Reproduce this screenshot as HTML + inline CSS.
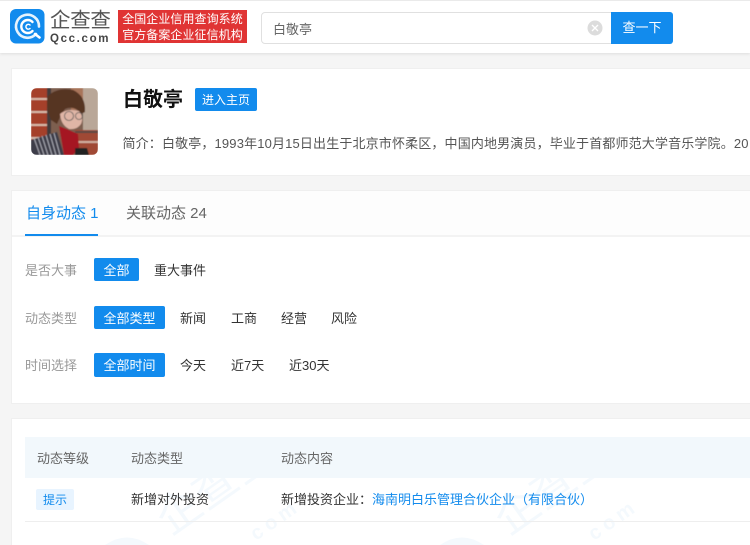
<!DOCTYPE html>
<html lang="zh"><head><meta charset="utf-8"><style>
html,body{margin:0;padding:0;width:750px;height:545px;overflow:hidden}
body{background:#f5f5f5;font-family:"Liberation Sans","Noto Sans CJK SC",sans-serif;font-size:13px;color:#333}
#w{position:relative;width:750px;height:545px;overflow:hidden}
.a{position:absolute;white-space:nowrap}
.card{position:absolute;left:11px;width:739px;background:#fff;border:1px solid #efefef;border-right:0;box-sizing:border-box}
.t{position:absolute;white-space:nowrap;line-height:20px;height:20px}
.btn{position:absolute;left:94px;height:23px;line-height:25px;background:#128bed;color:#fff;text-align:center;border-radius:2px}
.lab{color:#999}
</style></head><body><div id="w">
<div class="a" style="left:0;top:0;width:750px;height:53px;background:#fff;border-top:1px solid #eaeaea;box-sizing:border-box;box-shadow:0 1px 3px rgba(0,0,0,.1)"></div>
<svg class="a" style="left:10px;top:9px" width="35" height="35" viewBox="0 0 35 35"><rect width="34.500" height="34.500" rx="6" fill="#128bed"/><g fill="none" stroke="#fff" stroke-linecap="round"><path d="M26 25A11.500 11.500 0 1 1 29 17.500" stroke-width="2.600" stroke="#e6f3fd"/><path d="M25 25L29.500 28.500" stroke-width="2.600"/><path d="M22.500 13A6.500 6.500 0 1 0 22.500 22" stroke-width="2.400"/><path d="M20 16A2.400 2.400 0 1 0 20 19.500" stroke-width="1.500"/></g></svg>
<div class="a" style="left:50px;top:8px;font-size:20.500px;line-height:26px;color:#555;letter-spacing:-.300px">企查查</div>
<div class="a" style="left:50px;top:32px;font-size:11.500px;line-height:14px;font-weight:bold;color:#444;letter-spacing:1.650px">Qcc.com</div>
<div class="a" style="left:118px;top:10px;width:129px;height:33px;background:#e03434;color:#fff;font-size:12px;line-height:16px;text-align:center;padding-top:1px;box-sizing:border-box;letter-spacing:.060px">全国企业信用查询系统<br>官方备案企业征信机构</div>
<div class="a" style="left:261px;top:12px;width:351px;height:32px;box-sizing:border-box;border:1px solid #e0e0e0;border-radius:4px 0 0 4px;background:#fff;line-height:33px;padding-left:11px;color:#666">白敬亭</div>
<svg class="a" style="left:587px;top:20px" width="16" height="16" viewBox="0 0 16 16"><circle cx="8" cy="8" r="7.500" fill="#dcdcdc"/><path d="M5 5L11 11M11 5L5 11" stroke="#fff" stroke-width="1.300"/></svg>
<div class="a" style="left:611px;top:12px;width:62px;height:32px;background:#128bed;color:#fff;text-align:center;line-height:32px;border-radius:0 3px 3px 0">查一下</div>

<div class="card" style="top:68px;height:108px"></div>
<svg class="a" style="left:31px;top:88px" width="67" height="67" viewBox="0 0 67 67"><defs><clipPath id="c"><rect width="67" height="67" rx="6"/></clipPath><filter id="b"><feGaussianBlur stdDeviation=".6"/></filter></defs><g clip-path="url(#c)"><g filter="url(#b)"><rect width="67" height="67" fill="#7d5f50"/><rect width="17" height="67" fill="#a5402a"/><path d="M0 11H17M0 24H17M0 37H17M0 50H17" stroke="#d8b9a8" stroke-width="2"/><rect x="16" width="4" height="50" fill="#433a3a"/><rect x="52" y="0" width="15" height="42" fill="#b9a798"/><rect x="40" y="0" width="12" height="22" fill="#a8745a"/><rect x="44" y="42" width="23" height="25" fill="#a04a34"/><path d="M46 54H67" stroke="#d0b0a0" stroke-width="2"/><path d="M44 44H67" stroke="#5a4a44" stroke-width="2"/><path d="M17 8Q26 -1 42 2Q55 8 54 24L50 26Q44 17 34 21L30 27L26 36L20 32Q14 18 17 8Z" fill="#573424"/><path d="M29 26Q36 20 48 23Q53 29 50 36Q46 42 38 41Q30 37 29 26Z" fill="#dfb5a6"/><circle cx="38" cy="28" r="4.500" fill="none" stroke="#555" stroke-width=".8"/><circle cx="48" cy="28" r="3.500" fill="none" stroke="#555" stroke-width=".8"/><path d="M28 38L38 42L47 46L48 60L42 67H33Z" fill="#a51420"/><path d="M0 52L26 44L33 67H0Z" fill="#3e3d48"/><path d="M3 50L9 67M7 49L13 67M11 48L17 67M15 47L21 67M19 46L25 67M23 45L29 67" stroke="#b5b6c0" stroke-width=".9"/><path d="M44 60L56 60L58 67H44Z" fill="#222"/></g></g></svg>
<div class="a" style="left:123px;top:85px;font-size:20px;line-height:30px;font-weight:bold;color:#111">白敬亭</div>
<div class="a" style="left:195px;top:88px;width:62px;height:23px;line-height:24px;background:#128bed;color:#fff;border-radius:2px;text-align:center;font-size:12px">进入主页</div>
<div class="t" style="left:122.500px;top:134px;color:#555;letter-spacing:.150px">简介：白敬亭，1993年10月15日出生于北京市怀柔区，中国内地男演员，毕业于首都师范大学音乐学院。20</div>

<div class="card" style="top:190px;height:214px"></div>
<div class="a" style="left:12px;top:191px;width:738px;height:46px;background:#fdfdfd;border-bottom:2px solid #f3f3f3;box-sizing:border-box"></div>
<div class="t" style="left:26px;top:204px;font-size:15px;color:#128bed">自身动态 1</div>
<div class="t" style="left:126px;top:204px;font-size:15px;color:#666">关联动态 24</div>
<div class="a" style="left:25px;top:234px;width:73px;height:2px;background:#128bed"></div>

<div class="t lab" style="left:25px;top:261px">是否大事</div>
<div class="btn" style="top:258px;width:45px">全部</div>
<div class="t" style="left:154px;top:261px">重大事件</div>

<div class="t lab" style="left:25px;top:309px">动态类型</div>
<div class="btn" style="top:306px;width:71px">全部类型</div>
<div class="t" style="left:180px;top:309px">新闻</div>
<div class="t" style="left:231px;top:309px">工商</div>
<div class="t" style="left:281px;top:309px">经营</div>
<div class="t" style="left:331px;top:309px">风险</div>

<div class="t lab" style="left:25px;top:356px">时间选择</div>
<div class="btn" style="top:353px;width:71px;height:24px;line-height:26px">全部时间</div>
<div class="t" style="left:180px;top:356px">今天</div>
<div class="t" style="left:231px;top:356px">近7天</div>
<div class="t" style="left:289px;top:356px">近30天</div>

<div class="card" style="top:418px;height:127px;border-bottom:0"></div>
<svg class="a" style="left:12px;top:478px" width="738" height="67" viewBox="12 478 738 67">
<g fill="#f4f9fd" font-family="'Liberation Sans','Noto Sans CJK SC',sans-serif">
<text x="170" y="536" font-size="44" transform="rotate(-35 170 536)">企查查</text>
<text x="508" y="536" font-size="44" transform="rotate(-35 508 536)">企查查</text>
<g font-size="20" font-weight="bold" letter-spacing="5">
<text x="256" y="541" transform="rotate(-35 256 541)">com</text>
<text x="594" y="541" transform="rotate(-35 594 541)">com</text>
</g>
<path d="M105 545Q127 530 149 545Z"/><path d="M440 545Q462 530 484 545Z"/>
</g></svg>
<div class="a" style="left:25px;top:437px;width:725px;height:41px;background:#f2f8fc"></div>
<div class="t" style="left:37px;top:449px;color:#666">动态等级</div>
<div class="t" style="left:131px;top:449px;color:#666">动态类型</div>
<div class="t" style="left:281px;top:449px;color:#666">动态内容</div>
<div class="a" style="left:36px;top:489px;width:38px;height:21px;line-height:22px;background:#e8f4ff;color:#128bed;text-align:center;border-radius:2px;font-size:12px">提示</div>
<div class="t" style="left:131px;top:490px">新增对外投资</div>
<div class="t" style="left:281px;top:490px">新增投资企业：</div>
<div class="t" style="left:372px;top:490px;color:#128bed">海南明白乐管理合伙企业（有限合伙）</div>
<div class="a" style="left:25px;top:521px;width:725px;height:1px;background:#eee"></div>
</div></body></html>
